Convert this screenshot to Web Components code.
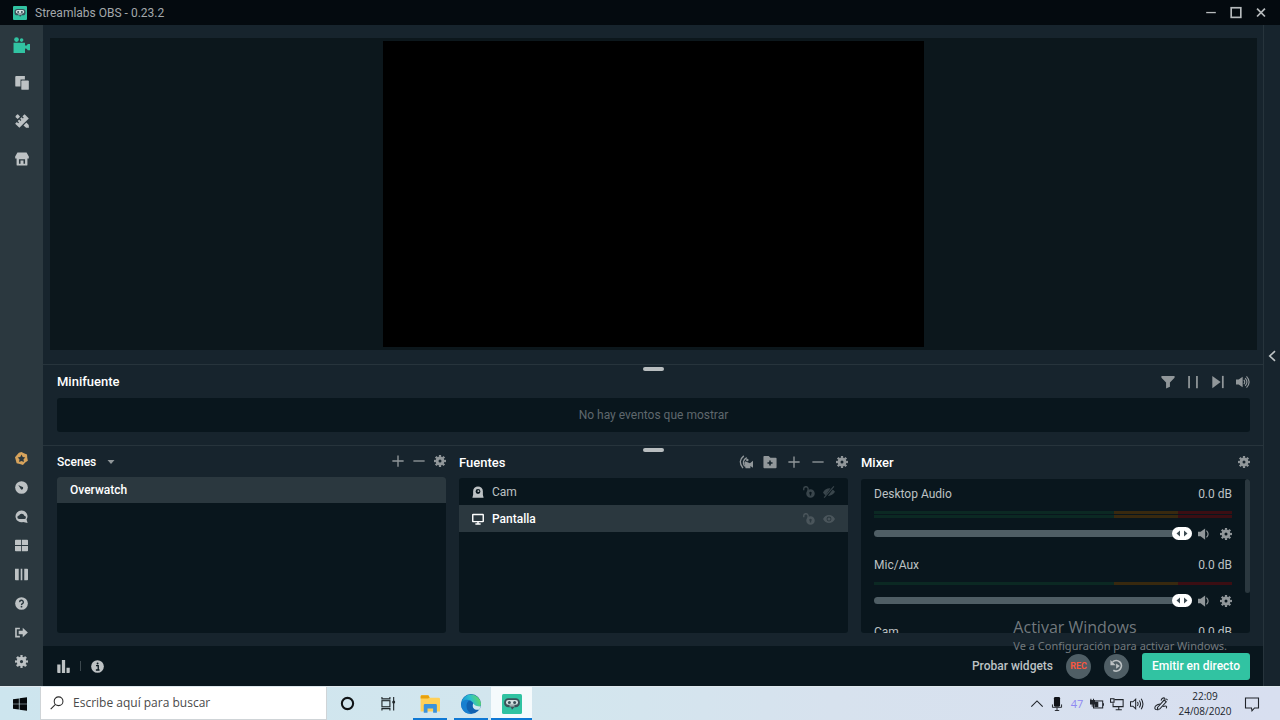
<!DOCTYPE html>
<html lang="es">
<head>
<meta charset="utf-8">
<meta name="viewport" content="width=device-width, initial-scale=1">
<title>Streamlabs OBS</title>
<style>
  :root {
    --bg: #17242d;
    --section: #09161d;
    --nav: #2b383f;
    --border: #27343c;
    --icon: #91979a;
    --icon-light: #bdc2c4;
    --teal: #31c3a2;
    --white: #ffffff;
    --text: #bdc2c4;
  }
  html, body { margin: 0; height: 100%; }
  body { background: var(--bg); overflow: hidden; font-family: Roboto, "Liberation Sans", sans-serif; }
</style>
</head>
<body>
<sl-desktop></sl-desktop>
<script>
const base = `*{box-sizing:border-box}
button{appearance:none;border:0;margin:0;padding:0;background:none;color:inherit;font:inherit;display:flex;align-items:center;justify-content:center;cursor:pointer}
h2{margin:0;font-weight:500;font-size:13px;line-height:16px;color:var(--white)}
ul{list-style:none;margin:0;padding:0}`;

function define(tag, css, html) {
  const template = document.createElement('template');
  template.innerHTML = `<style>${base}${css}</style>${html}`;
  customElements.define(tag, class extends HTMLElement {
    constructor() {
      super();
      this.attachShadow({ mode: 'open' }).append(template.content.cloneNode(true));
    }
  });
}

/* Icon set: every drawing uses a 16 x 16 grid and currentColor. */
const robot = `<rect width="16" height="16" rx="1.2" fill="#31c3a2"/><path d="M5 3.4h6a3.300 3.300 0 0 1 3.300 3.300v.6a3.300 3.300 0 0 1-3.300 3.300H9.800L8 12.600l-.8-2H5a3.300 3.300 0 0 1-3.300-3.300v-.6A3.300 3.300 0 0 1 5 3.400z" fill="#3a5159"/><rect x="3.200" y="4.700" width="9.600" height="3.900" rx="1.900" fill="#d5e2e2"/><circle cx="5.900" cy="6.800" r="1.200" fill="#3a5159"/><circle cx="10.100" cy="6.800" r="1.200" fill="#3a5159"/><path d="M6 9.500h4" stroke="#d5e2e2" stroke-width=".8"/>`;
const icons = {
  robot,
  gear: `<g fill="none" stroke="currentColor"><circle cx="8" cy="8" r="4" stroke-width="4"/><circle cx="8" cy="8" r="6.500" stroke-width="3" pathLength="16" stroke-dasharray="1.100 .9" stroke-dashoffset=".55"/></g>`,
  plus: `<path d="M8 .5v15M.5 8h15" stroke="currentColor" stroke-width="1.800"/>`,
  minus: `<path d="M.5 8h15" stroke="currentColor" stroke-width="1.800"/>`,
  studio: `<g fill="currentColor"><circle cx="3.300" cy="2.400" r="2.200"/><circle cx="8.100" cy="2.900" r="1.700"/><path d="M.5 5.500h10.800v2.600l1.500-.2 1.200-1.400H16v6h-2l-1.200-1.400-1.500-.2V15H.5z"/></g>`,
  themes: `<path d="M1.300 0h10v4h-5v8h-5q-1 0-1-1V1q0-1 1-1z" fill="currentColor"/><rect x="7.200" y="5.200" width="8.600" height="10.600" rx="1" fill="currentColor"/>`,
  tools: `<g fill="currentColor"><path d="M11 .2L15.800 5 5 15.800.2 11l1.900-1.900 1.500 1.500 1-1-1.500-1.500 1.700-1.700 1.500 1.500 1-1-1.500-1.500 1.700-1.700 1.500 1.500 1-1-1.500-1.500z"/><path d="M2.800.4Q3.500.4 5.800 3L3 5.800.5 3.300Q.3 2.400 2.800.4zM13 9.800l2.700 2.900.2 3.100-3.200-.1-3-2.600z"/></g>`,
  store: `<path fill="currentColor" fill-rule="evenodd" d="M2.800.5h10.400L15.800 5v2.300h-1.600v7.200a1 1 0 0 1-1 1H2.800a1 1 0 0 1-1-1V7.300H.2V5zM4.500 8.300v5.200h1.800v-3.700h3.400v3.700h1.800V8.300z"/>`,
  prime: `<path d="M8 0l3 1.500 3.800 1.600.3 4 .7 3.700-3.200 2.200L9.800 16 6 14.700l-4-.9L1 10 0 6.500l2.600-3L4.800.8z" fill="#d6a35c"/><path d="M8 3.200l1.500 2.900 3.200.6-2.200 2.300.4 3.300L8 11l-2.900 1.300.4-3.300-2.200-2.300 3.200-.6z" fill="#2b383f"/>`,
  dash: `<circle cx="8" cy="8" r="7.800" fill="currentColor"/><path d="M4 5l5 2.500a1.500 1.500 0 1 1-2 2z" fill="#2b383f"/><circle cx="8.500" cy="8.500" r="1.500" fill="#2b383f"/>`,
  cloud: `<path d="M8 .5a7.300 7.300 0 1 0 2 14.300L15.500 16l-1.300-4.300A7.300 7.300 0 0 0 8 .5z" fill="currentColor"/><path d="M5 11h6.300a2 2 0 0 0 .2-4A3.400 3.400 0 0 0 5 6.800 2.100 2.100 0 0 0 5 11z" fill="#2b383f"/>`,
  grid: `<path d="M1 1h6.500v6.300H0V2q0-1 1-1zM8.500 1H15q1 0 1 1v5.300H8.500zM0 8.500h7.500V15H1q-1 0-1-1zM8.500 8.500H16V14q0 1-1 1H8.500z" fill="currentColor"/>`,
  bars: `<path d="M0 1h4.600v14H1q-1 0-1-1zM7 1h2v14H7zM11.400 1H15q1 0 1 1v12q0 1-1 1h-3.600z" fill="currentColor"/>`,
  help: `<circle cx="8" cy="8" r="7.800" fill="currentColor"/><path d="M5.700 6.300a2.300 2.300 0 1 1 3.500 1.900q-1.200.7-1.200 1.500" fill="none" stroke="#2b383f" stroke-width="1.700"/><circle cx="8" cy="11.900" r="1.100" fill="#2b383f"/>`,
  logout: `<path d="M6 3H1.200v10H6" fill="none" stroke="currentColor" stroke-width="2"/><path d="M4.500 5.800h5V2.300L15.800 8l-6.300 5.700v-3.500h-5z" fill="currentColor"/>`,
  min: `<path d="M2.500 7.500h11" stroke="currentColor" stroke-width="1.500"/>`,
  max: `<rect x="2.500" y="2" width="11" height="11" fill="none" stroke="currentColor" stroke-width="1.900"/>`,
  close: `<path d="M3.500 3l9 9M12.500 3l-9 9" stroke="currentColor" stroke-width="2"/>`,
  chevleft: `<path d="M12 1.500L5 8l7 6.500" fill="none" stroke="currentColor" stroke-width="2.200"/>`,
  caret: `<path d="M1 4h14L8 12z" fill="currentColor"/>`,
  filter: `<path d="M.5 1h15v2.200L10.200 8.500v5L5.800 15.500v-7L.5 3.200z" fill="currentColor"/>`,
  pause: `<path d="M3.500 1v14M12.500 1v14" stroke="currentColor" stroke-width="2"/>`,
  next: `<path d="M1.500 1l9.500 7-9.500 7z" fill="currentColor"/><path d="M13.500 1v14" stroke="currentColor" stroke-width="2"/>`,
  volume: `<path d="M0 5.200h3L7.600 2v12L3 10.800H0z" fill="currentColor"/><path d="M9 5.500q2 2.500 0 5M10.500 3.500q4 4.500 0 9M12 1.500q6 6.500 0 13" fill="none" stroke="currentColor" stroke-width="1.300"/>`,
  speaker: `<path d="M0 5h3.500L9.500.5v15L3.500 11H0z" fill="currentColor"/><path d="M11.300 3.500q4.300 4.500 0 9" fill="none" stroke="currentColor" stroke-width="1.500"/>`,
  audio: `<path d="M5.500 1Q-2 7 4.500 15M8.800 3Q2.500 7 6.500 13" fill="none" stroke="currentColor" stroke-width="1.500"/><path d="M6 9l1-2 5.500 2.300L16 6.500v8l-3-2V15H7.500z" fill="currentColor"/><circle cx="9.500" cy="5.800" r="1.400" fill="currentColor"/>`,
  folder: `<path fill-rule="evenodd" d="M.5 2q0-1 1-1h5l2 2h6q1 0 1 1v10q0 1-1 1h-13q-1 0-1-1zM7.100 6.200v2h-2V10h2v2h1.800v-2h2V8.200h-2v-2z" fill="currentColor"/>`,
  webcam: `<path fill-rule="evenodd" d="M8 .5a6.500 6.500 0 0 1 6.500 6.500v4.500l1 4H.5l1-4V7A6.500 6.500 0 0 1 8 .5zM8 4a3.200 3.200 0 1 0 0 6.500A3.200 3.200 0 0 0 8 4z" fill="currentColor"/><circle cx="8.500" cy="6.800" r="1.300" fill="currentColor"/>`,
  monitor: `<rect x="1" y="2" width="14" height="9.500" rx=".5" fill="none" stroke="currentColor" stroke-width="1.900"/><path d="M8 12v2M4.500 14.500h7" stroke="currentColor" stroke-width="2"/>`,
  unlock: `<path d="M1 5.500V4a2.900 2.900 0 0 1 5.800-.4V7" fill="none" stroke="currentColor" stroke-width="1.900"/><path fill-rule="evenodd" d="M10 4.200a5.700 5.700 0 1 0 0 11.400 5.700 5.700 0 0 0 0-11.400zM10 7.500a1.700 1.700 0 0 0-.9 3.100v2h1.800v-2A1.700 1.700 0 0 0 10 7.500z" fill="currentColor"/>`,
  eye: `<path fill-rule="evenodd" d="M8 2.800q5.200 0 8 5.200-2.800 5.200-8 5.200T0 8q2.800-5.200 8-5.200zM8 4.700a3.300 3.300 0 1 0 0 6.600 3.300 3.300 0 0 0 0-6.600z" fill="currentColor"/><circle cx="8" cy="8" r="2" fill="currentColor"/>`,
  eyeoff: `<path d="M10 3L3.500 12.300Q1.500 11 0 8.500 3.500 2.500 10 3zM13 4.500Q15 6 16 7.800 12.500 13.500 6.500 13.300z" fill="currentColor"/><path d="M1.500 15.500L14.500.5" stroke="currentColor" stroke-width="1.500"/>`,
  chart: `<path d="M.3 5.500h4V16h-3q-1 0-1-1zM6 0h4v16H6zM11.700 9.500h4V15q0 1-1 1h-3z" fill="currentColor"/>`,
  info: `<circle cx="8" cy="8" r="7.800" fill="currentColor"/><path d="M6.200 7h2.700v5.300M6 12.300h4.500" fill="none" stroke="#09161d" stroke-width="1.600"/><circle cx="8.100" cy="4.300" r="1.200" fill="#09161d"/>`,
  replay: `<path d="M3 3.300A6 6 0 1 1 3.800 12.800" fill="none" stroke="currentColor" stroke-width="2"/><path d="M.5 1v6h6z" fill="currentColor"/><path d="M7 5l4.300 3L7 11z" fill="currentColor"/>`,
  windows: `<path d="M0 2.500l6.700-.9v6H0zM7.500 1.500L16 .3v7.300H7.500zM0 8.400h6.700v6L0 13.500zM7.500 8.400H16v7.300l-8.500-1.200z" fill="#05090b"/>`,
  search: `<g fill="none" stroke="#2a2a2a" stroke-width="1.200"><circle cx="9.800" cy="6" r="5"/><path d="M6.200 9.700L.8 15"/></g>`,
  cortana: `<circle cx="8" cy="8" r="6" fill="none" stroke="#101416" stroke-width="2.200"/>`,
  taskview: `<g fill="none" stroke="#20282b" stroke-width="1.200"><rect x="1" y="5" width="8.500" height="6.500"/><path d="M1 1v2h8.500V1M1 15.500v-2h8.500v2M13.500 1v14.500"/></g><circle cx="13.500" cy="6.500" r="1.600" fill="#20282b"/>`,
  explorer: `<path d="M.5 2q0-1 1-1h5l1.500 2H15q1 0 1 1v10H.5z" fill="#ffd058"/><path d="M.5 2q0-1 1-1h5.200l1 1.800-1.200.7h-6z" fill="#e8a10d"/><path d="M3 15V9q0-1 1-1h8.500q1 0 1 1v6h-3v-3.500H6V15z" fill="#3b92dc"/>`,
  edge: `<defs><linearGradient id="g" x1="0" y1=".6" x2="1" y2=".3"><stop offset="0" stop-color="#168bd5"/><stop offset=".5" stop-color="#2bbfd0"/><stop offset="1" stop-color="#63dc57"/></linearGradient></defs><circle cx="8" cy="8" r="8" fill="#1161b0"/><path d="M.2 7A8 8 0 0 1 16 7.500q.1 3.500-3.600 3.800-2.800.1-2.900-1 1.200-1.500.2-3.300Q7.500 3.900 3.800 5 1.300 5.800.2 7z" fill="url(#g)"/><path d="M.2 7Q3 3.600 7 5.200q-2.600 1-2.600 4.300.1 4.400 4.500 6.300Q3.400 16.500 1 12 0 10 .2 7z" fill="#187fd0"/><path d="M9.500 10.300q-.6-1.200.4-3Q11 9.800 15.800 10q-.5 1.600-1.400 2.600-3.900.5-4.900-2.300z" fill="#d1e7ef"/>`,
  up: `<path d="M1.500 11L8 4.500l6.500 6.500" fill="none" stroke="#20242a" stroke-width="1.300"/>`,
  mic: `<rect x="4.500" y="0" width="7" height="11" rx="1.500" fill="#101318"/><path d="M2.800 8.500v3.300h10.400V8.500M8 12v3.500M5.500 15.500h5" fill="none" stroke="#101318" stroke-width="1"/>`,
  battery: `<rect x="4" y="4.500" width="10.500" height="8" fill="none" stroke="#20242a" stroke-width="1.200"/><path d="M15.500 7v3M0 4h5v4H0zM1 2v2M4 2v2" stroke="#20242a" stroke-width="1.200"/><path d="M0 4h5v4H3v3H2V8H0zM5 5.500h4.500v6H5z" fill="#20242a"/>`,
  network: `<g fill="none" stroke="#20242a" stroke-width="1.200"><path d="M5 3h10v8H3.500V7M10 11v3M6.500 14.500h7"/><rect x="0.600" y="2" width="4" height="4"/></g>`,
  traysound: `<g fill="none" stroke="#20242a" stroke-width="1.200"><path d="M.6 5.500h2.700L6.500 2.500v11l-3.200-3H.6zM8.500 5.800q1.500 2.200 0 4.400M10.600 4q2.900 4 0 8M12.800 2q4 6 0 12"/></g>`,
  pen: `<g fill="none" stroke="#20242a" stroke-width="1.200"><path d="M4 12L11.500 3.500l2.500 2-7.500 8.200L4 14z"/><path d="M8 4q1-3 3-3t1.500 3M7 8Q1.500 9 1 12t4 2.500M10 11q3-1 4-.5t0 2.500M14 2l1.500 1.500"/></g>`,
  note: `<path d="M1.500 2h13v10h-4L8 14.800 7.500 12h-6z" fill="none" stroke="#20242a" stroke-width="1.100"/>`
};

customElements.define('sl-icon', class extends HTMLElement {
  connectedCallback() {
    if (this.shadowRoot) return;
    this.attachShadow({ mode: 'open' }).innerHTML =
      `<style>:host{display:block;flex:none;width:var(--size,12px);height:var(--size,12px)}svg{display:block;width:100%;height:100%}</style>
       <svg viewBox="0 0 16 16" aria-hidden="true">${icons[this.getAttribute('name')]}</svg>`;
  }
});

define('sl-titlebar', `
:host{display:flex;align-items:center;height:25px;flex:none;padding:0 7px 0 13px;background:#040a0f;color:#a3a8ab;font-size:12px;line-height:16px}
.logo{--size:14px;margin-right:8px}
span{flex:1}
button{width:25px;height:25px}
button sl-icon{--size:14px;color:#b7bbbd}`,
`<sl-icon class="logo" name="robot"></sl-icon><span>Streamlabs OBS - 0.23.2</span>
<button aria-label="Minimizar"><sl-icon name="min"></sl-icon></button>
<button aria-label="Maximizar"><sl-icon name="max"></sl-icon></button>
<button aria-label="Cerrar"><sl-icon name="close"></sl-icon></button>`);

define('sl-sidebar', `
:host{display:flex;flex-direction:column;justify-content:space-between;background:var(--nav);color:var(--icon-light);padding:1px 0 10px}
nav{display:flex;flex-direction:column}
button{width:100%}
.top button{height:38px}.top sl-icon{--size:14px}
.top .active{color:var(--teal)}.top .active sl-icon{--size:17px}
.bottom button{height:29px}.bottom sl-icon{--size:13px}`,
`<nav class="top" aria-label="Principal">
<button class="active" aria-label="Editor"><sl-icon name="studio"></sl-icon></button>
<button aria-label="Temas"><sl-icon name="themes"></sl-icon></button>
<button aria-label="Herramientas"><sl-icon name="tools"></sl-icon></button>
<button aria-label="Tienda"><sl-icon name="store"></sl-icon></button></nav>
<nav class="bottom" aria-label="Opciones">
<button aria-label="Prime"><sl-icon name="prime"></sl-icon></button>
<button aria-label="Panel"><sl-icon name="dash"></sl-icon></button>
<button aria-label="Cloudbot"><sl-icon name="cloud"></sl-icon></button>
<button aria-label="Diseño"><sl-icon name="grid"></sl-icon></button>
<button aria-label="Columnas"><sl-icon name="bars"></sl-icon></button>
<button aria-label="Ayuda"><sl-icon name="help"></sl-icon></button>
<button aria-label="Salir"><sl-icon name="logout"></sl-icon></button>
<button aria-label="Ajustes"><sl-icon name="gear"></sl-icon></button></nav>`);

define('sl-preview', `
:host{display:block;flex:1;min-height:0;padding:13px 6px 14px 7px}
.stage{height:100%;padding:3px;background:#0c171c;display:flex;justify-content:center}
.canvas{height:100%;aspect-ratio:541/306;background:#000}`,
`<div class="stage"><div class="canvas"></div></div>`);

define('sl-handle', `
:host{display:flex;justify-content:center;height:8px;padding-top:2px;border-top:1px solid var(--border)}
i{width:21px;height:4px;border-radius:2px;background:#b8bdbf}`, `<i></i>`);

define('sl-minifeed', `
:host{display:block;padding:0 13px 13px 14px}
header{display:flex;align-items:center;justify-content:space-between;height:20px;margin-bottom:6px}
.tools{display:flex;gap:11px;color:var(--icon)}
.tools sl-icon{--size:14px}
.feed{height:34px;border-radius:3px;background:var(--section);display:flex;align-items:center;justify-content:center;color:#5f686d;font-size:12px;line-height:16px}`,
`<header><h2>Minifuente</h2><div class="tools">
<button aria-label="Filtrar"><sl-icon name="filter"></sl-icon></button>
<button aria-label="Pausar"><sl-icon name="pause"></sl-icon></button>
<button aria-label="Omitir"><sl-icon name="next"></sl-icon></button>
<button aria-label="Silenciar"><sl-icon name="volume"></sl-icon></button></div></header>
<div class="feed">No hay eventos que mostrar</div>`);

define('sl-panel', `
:host{display:flex;flex-direction:column;min-width:0}
header{display:flex;align-items:center;justify-content:space-between;height:var(--head,26px);flex:none;padding-bottom:6px}
.tools{display:flex;gap:12px;padding-bottom:2px;color:var(--icon)}
.body{flex:1;min-height:0;border-radius:3px;background:var(--section);overflow:hidden}`,
`<header><slot name="title"></slot><div class="tools"><slot name="tools"></slot></div></header><div class="body"><slot></slot></div>`);

define('sl-scenes', `
:host{display:grid;--head:24px}
.picker{font-size:12px;font-weight:500;line-height:16px;color:var(--white);gap:11px}
.picker sl-icon{--size:8px;color:var(--icon)}
.row{height:26px;padding:0 13px;line-height:26px;font-size:12px;font-weight:500;background:var(--nav);color:var(--white)}
.tool{width:12px;height:12px}
.tool + .tool{margin-left:-3px}`,
`<sl-panel><button class="picker" slot="title">Scenes<sl-icon name="caret"></sl-icon></button>
<button class="tool" slot="tools" aria-label="Añadir escena"><sl-icon name="plus"></sl-icon></button>
<button class="tool" slot="tools" aria-label="Quitar escena"><sl-icon name="minus"></sl-icon></button>
<button class="tool" slot="tools" aria-label="Ajustes de escena"><sl-icon name="gear"></sl-icon></button>
<ul><li class="row">Overwatch</li></ul></sl-panel>`);

define('sl-source', `
:host{display:flex;align-items:center;height:27px;padding:0 13px;font-size:12px;line-height:16px;color:var(--text)}
:host([selected]){background:var(--nav);color:var(--white);font-weight:500}
.name{flex:1;margin-left:8px}
.acts{display:flex;gap:8px;color:#39454b}
:host([selected]) .acts{color:#4a555b}`,
`<slot name="kind"></slot><span class="name"><slot></slot></span>
<span class="acts"><button aria-label="Bloquear"><sl-icon name="unlock"></sl-icon></button><button aria-label="Visibilidad"><slot name="eye"></slot></button></span>`);

define('sl-sources', `
:host{display:grid;--head:25px}
button{width:12px;height:12px}
.wide{--size:14px}`,
`<sl-panel><h2 slot="title">Fuentes</h2>
<button slot="tools" aria-label="Filtros de audio"><sl-icon class="wide" name="audio"></sl-icon></button>
<button slot="tools" aria-label="Nueva carpeta"><sl-icon class="wide" name="folder"></sl-icon></button>
<button slot="tools" aria-label="Añadir fuente"><sl-icon name="plus"></sl-icon></button>
<button slot="tools" aria-label="Quitar fuente"><sl-icon name="minus"></sl-icon></button>
<button slot="tools" aria-label="Ajustes de fuente"><sl-icon name="gear"></sl-icon></button>
<sl-source><sl-icon slot="kind" name="webcam"></sl-icon>Cam<sl-icon slot="eye" name="eyeoff"></sl-icon></sl-source>
<sl-source selected><sl-icon slot="kind" name="monitor"></sl-icon>Pantalla<sl-icon slot="eye" name="eye"></sl-icon></sl-source></sl-panel>`);

const knob = encodeURIComponent(`<svg xmlns="http://www.w3.org/2000/svg" viewBox="0 0 20 13"><path d="M8 3.500v6L4.500 6.500zM12 3.500v6l3.500-3z" fill="#3c4a51"/></svg>`);
define('sl-channel', `
:host{display:flex;flex-direction:column;gap:9px;font-size:12px;line-height:16px;color:var(--text)}
.label{display:flex;justify-content:space-between}
.meters{display:flex;flex-direction:column;gap:1px}
.meters i{height:3px;background:linear-gradient(90deg,#0b2923 67%,#38290f 67% 85%,#3b0e13 85%)}
:host([mono]) .meters i + i{display:none}
.controls{display:flex;align-items:center;height:13px;color:var(--icon)}
input{appearance:none;flex:1;min-width:0;height:13px;margin:0 6px 0 0;background:none}
input::-webkit-slider-runnable-track{height:7px;border-radius:4px;background:#4f5e65}
input::-webkit-slider-thumb{appearance:none;width:20px;height:13px;margin-top:-3px;border-radius:7px;background:#fff url("data:image/svg+xml,${knob}")}
button + button{margin-left:10px}`,
`<div class="label"><label for="v"><slot></slot></label><span>0.0 dB</span></div>
<div class="meters"><i></i><i></i></div>
<div class="controls"><input id="v" type="range" min="0" max="100" value="100">
<button aria-label="Silenciar"><sl-icon name="speaker"></sl-icon></button><button aria-label="Ajustes"><sl-icon name="gear"></sl-icon></button></div>`);

define('sl-mixer', `
:host{display:grid}
.wrap{display:flex;height:100%;justify-content:space-between}
.list{flex:1;display:flex;flex-direction:column;gap:17px;padding:7px 13px;height:0}
.bar{width:5px;height:114px;border-radius:3px;background:var(--nav)}`,
`<sl-panel><h2 slot="title">Mixer</h2>
<button slot="tools" aria-label="Ajustes del mezclador"><sl-icon name="gear"></sl-icon></button>
<div class="wrap"><div class="list"><sl-channel>Desktop Audio</sl-channel><sl-channel mono>Mic/Aux</sl-channel><sl-channel mono>Cam</sl-channel></div><div class="bar"></div></div></sl-panel>`);

define('sl-footer', `
:host{display:flex;align-items:center;justify-content:space-between;height:40px;flex:none;padding:0 13px 0 14px;background:var(--section);color:var(--icon-light)}
div{display:flex;align-items:center}
.left{gap:10px}
.left i{width:1px;height:10px;background:#3c484e}
.left sl-icon{--size:13px}
.right{gap:13px}
.right button{font-size:12px;font-weight:500;line-height:16px}
.right .round{width:25px;height:25px;border-radius:50%;background:#4f5e65}
.right .rec{font-size:9px;font-weight:700;color:#f85640}
.round sl-icon{--size:14px}
.live{height:27px;padding:0 10px;border-radius:3px;background:var(--teal);color:#fff}`,
`<div class="left"><button aria-label="Rendimiento"><sl-icon name="chart"></sl-icon></button><i></i><button aria-label="Información"><sl-icon name="info"></sl-icon></button></div>
<div class="right"><button>Probar widgets</button><button class="round rec">REC</button><button class="round" aria-label="Repetición"><sl-icon name="replay"></sl-icon></button><button class="live">Emitir en directo</button></div>`);

define('sl-app', `
:host{display:grid;grid-template-columns:43px minmax(0,1fr) 17px;flex:1;min-height:0}
main{display:flex;flex-direction:column;min-height:0;min-width:0}
.panels{display:grid;grid-template-columns:repeat(3,minmax(0,1fr));gap:13px;height:193px;padding:0 13px 13px 14px}
.chat{border-left:1px solid var(--border);color:var(--icon-light)}
.chat button{width:100%;height:100%}`,
`<sl-sidebar></sl-sidebar>
<main><sl-preview></sl-preview><sl-handle></sl-handle><sl-minifeed></sl-minifeed><sl-handle></sl-handle>
<div class="panels"><sl-scenes></sl-scenes><sl-sources></sl-sources><sl-mixer></sl-mixer></div>
<sl-footer></sl-footer></main>
<aside class="chat"><button aria-label="Abrir chat"><sl-icon name="chevleft"></sl-icon></button></aside>`);

define('sl-taskbar', `
:host{display:flex;height:34px;flex:none;border-top:1px solid #dfe9ee;background:linear-gradient(90deg,#cde5ee,#d3e6ee 45%,#d7e2ee 65%,#d8dff0);font-family:"Open Sans","Noto Sans",sans-serif;color:#20242a}
.start{width:40px}.start sl-icon{--size:14px}
label{display:flex;align-items:center;flex:0 1 287px;padding:0 9px;gap:9px;background:#fff;border:1px solid #cfd4d7;border-top:0}
label sl-icon{--size:14px}
input{flex:1;min-width:0;border:0;padding:0;background:none;outline:0;font:12px/16px "Open Sans","Noto Sans",sans-serif}
input::placeholder{color:#4a4a4a;opacity:1}
.app{width:41px}
.cortana sl-icon{--size:15px}
.run{position:relative;--size:20px}
.run::after{content:"";position:absolute;left:4px;right:3px;bottom:0;height:2px;background:#0f78d4}
.run.on{background:#f5fafc}.run.on::after{left:0;right:0}
.tray{display:flex;align-items:center;margin-left:auto;padding-right:12px}
.tray sl-icon{--size:14px}
.tray button{width:20px;height:33px}
.num{width:20px;text-align:center;font-size:11px;line-height:16px;color:#8f88f2}
.tray .pen{width:27px}
.clock{width:62px;text-align:center;font-size:10px;line-height:15px}
.tray .note{width:32px}
.note sl-icon{--size:16px}`,
`<button class="start" aria-label="Inicio"><sl-icon name="windows"></sl-icon></button>
<label><sl-icon name="search"></sl-icon><input type="text" placeholder="Escribe aquí para buscar" aria-label="Buscar"></label>
<button class="app cortana" aria-label="Cortana"><sl-icon name="cortana"></sl-icon></button>
<button class="app cortana" aria-label="Vista de tareas"><sl-icon name="taskview"></sl-icon></button>
<button class="app run" aria-label="Explorador"><sl-icon name="explorer"></sl-icon></button>
<button class="app run" aria-label="Edge"><sl-icon name="edge"></sl-icon></button>
<button class="app run on" aria-label="Streamlabs OBS"><sl-icon name="robot"></sl-icon></button>
<div class="tray"><button aria-label="Iconos ocultos"><sl-icon name="up"></sl-icon></button>
<button aria-label="Micrófono"><sl-icon name="mic"></sl-icon></button><span class="num">47</span>
<button aria-label="Batería"><sl-icon name="battery"></sl-icon></button>
<button aria-label="Red"><sl-icon name="network"></sl-icon></button>
<button aria-label="Volumen"><sl-icon name="traysound"></sl-icon></button>
<button class="pen" aria-label="Lápiz"><sl-icon name="pen"></sl-icon></button>
<div class="clock"><div>22:09</div><div>24/08/2020</div></div>
<button class="note" aria-label="Notificaciones"><sl-icon name="note"></sl-icon></button></div>`);

define('win-watermark', `
:host{position:absolute;right:53px;bottom:66px;font-family:"Open Sans","Noto Sans",sans-serif;color:#72797d;pointer-events:none;white-space:nowrap}
p{margin:0}
.big{font-size:16px;line-height:22px}
.small{font-family:"Noto Sans",sans-serif;font-size:11px;line-height:16px}`,
`<p class="big">Activar Windows</p><p class="small">Ve a Configuración para activar Windows.</p>`);

define('sl-desktop', `
:host{display:flex;flex-direction:column;height:100vh;position:relative}`,
`<sl-titlebar></sl-titlebar><sl-app></sl-app><sl-taskbar></sl-taskbar><win-watermark></win-watermark>`);
</script>
</body>
</html>
